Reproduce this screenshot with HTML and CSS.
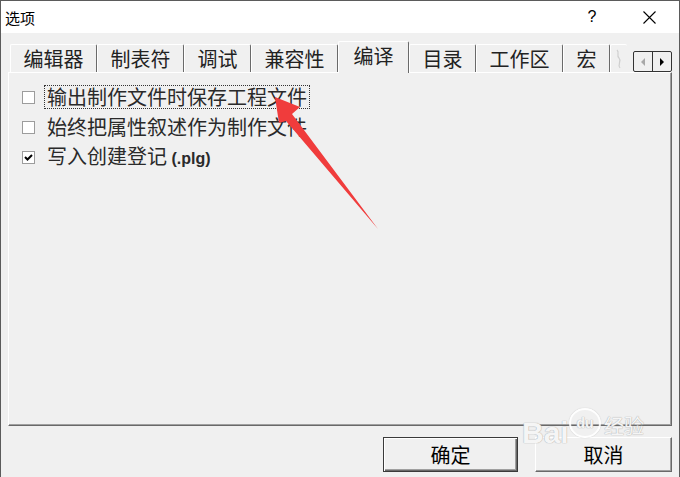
FILE: index.html
```html
<!DOCTYPE html>
<html lang="zh-CN">
<head>
<meta charset="UTF-8" />
<title>选项</title>
<link rel="stylesheet" href="styles.css">
</head>
<body>

<div class="window">
  <!-- title bar -->
  <div class="titlebar">
    <span class="title">选项</span>
    <span class="help">?</span>
    <span class="close">
      <svg width="13" height="13" viewBox="0 0 13 13"><path d="M0.5 0.5 L12.5 12.5 M12.5 0.5 L0.5 12.5" stroke="#000" stroke-width="1.1" /></svg>
    </span>
  </div>

  <div class="client">
    <!-- tabs -->
    <div class="tabstrip">
      <div class="tab">编辑器</div>
      <div class="tab">制表符</div>
      <div class="tab">调试</div>
      <div class="tab">兼容性</div>
      <div class="tab active">编译</div>
      <div class="tab">目录</div>
      <div class="tab">工作区</div>
      <div class="tab">宏</div>
      <div class="tab clipped">
        <svg width="8" height="20" viewBox="0 0 8 20"><path d="M2 1 C5 4 1 6 4 9 C7 12 2 15 5 19" fill="none" stroke="#cfcfcf" stroke-width="1.2" /></svg>
      </div>
      <div class="scroller">
        <span class="half"><i class="tri left"></i></span>
        <span class="half divided"><i class="tri right"></i></span>
      </div>
    </div>

    <!-- compile page -->
    <div class="panel">
      <div class="row"><span class="box"></span><span class="text focus">输出制作文件时保存工程文件</span></div>
      <div class="row"><span class="box"></span><span class="text">始终把属性叙述作为制作文件</span></div>
      <div class="row">
        <span class="box checked">
          <svg width="11" height="11" viewBox="0 0 11 11"><path d="M2 5 L4.5 7.5 L9 3" fill="none" stroke="#000" stroke-width="2" /></svg>
        </span>
        <span class="text">写入创建登记 <b class="ext">(.plg)</b></span>
      </div>
    </div>

    <div class="buttons">
      <button class="btn default">确定</button>
      <button class="btn">取消</button>
    </div>
  </div>

  <!-- annotation arrow -->
  <svg class="arrow" width="680" height="477" viewBox="0 0 680 477">
    <polygon points="275,97 300,107 292,114 378,229 286,121 279,123" fill="#f03c3c" />
  </svg>

  <!-- watermark -->
  <div class="watermark">
    <span class="wm-bai">Bai</span>
    <span class="wm-paw">du</span>
    <span class="wm-jy">经验</span>
  </div>
</div>

</body>
</html>
```

FILE: styles.css
```css
* {
  box-sizing: border-box;
}
body {
  margin: 0;
  font-family: "Noto Sans CJK SC", "Liberation Sans", sans-serif;
  color: #000;
}
.window {
  width: 680px;
  height: 477px;
  border: 1px solid #5b5b5b;
  border-bottom: none;
  background: #f0f0f0;
  display: flex;
  flex-direction: column;
  position: relative;
  overflow: hidden;
}

/* title bar */
.titlebar {
  height: 32px;
  background: #fff;
  display: flex;
  align-items: center;
  padding-left: 4px;
  font-size: 15px;
}
.title {
  flex: 1;
}
.help {
  width: 20px;
  text-align: center;
  margin-right: 24px;
  font-size: 16px;
  font-family: "Liberation Sans", sans-serif;
}
.close {
  width: 46px;
  margin-right: 7px;
  display: flex;
  justify-content: center;
}

/* tabs */
.client {
  flex: 1;
  display: flex;
  flex-direction: column;
}
.tabstrip {
  height: 39px;
  display: flex;
  align-items: flex-end;
  padding: 0 7px 0 9px;
}
.tab {
  flex: none;
  height: 28px;
  padding: 0 12.5px;
  border-top: 1px solid #fff;
  border-left: 1px solid #fff;
  border-right: 1px solid #6a6a6a;
  border-radius: 2px 2px 0 0;
  font-size: 20px;
  line-height: 26px;
  display: flex;
  align-items: center;
  white-space: nowrap;
  color: #222;
}
.tab.active {
  height: 32px;
  margin-bottom: -1px;
  padding: 0 14.5px 3px;
  background: #f0f0f0;
  position: relative;
  z-index: 1;
}
.tab.clipped {
  width: 17px;
  padding: 0 0 0 4px;
  border-right: none;
}
.scroller {
  flex: none;
  margin-left: auto;
  margin-bottom: 0;
  width: 39px;
  min-width: 39px;
  height: 21px;
  border: 1px solid #333;
  border-radius: 2px;
  display: flex;
  background: #f0f0f0;
  position: relative;
  z-index: 1;
}
.half {
  flex: none;
  width: 18px;
  height: 19px;
  display: flex;
  align-items: center;
  justify-content: center;
}
.half.divided {
  width: 19px;
  border-left: 1px solid #333;
}
.tri {
  display: block;
  width: 0;
  height: 0;
  border-top: 4px solid transparent;
  border-bottom: 4px solid transparent;
}
.tri.left {
  border-right: 4px solid #a8a8a8;
}
.tri.right {
  border-left: 4px solid #000;
}

/* page */
.panel {
  height: 354px;
  margin: 0 7px;
  border-top: 1px solid #fff;
  border-left: 1px solid #fff;
  border-right: 1px solid #696969;
  border-bottom: 1px solid #696969;
  box-shadow: inset -1px -1px 0 #a0a0a0;
  padding: 9px 0 0 13px;
}
.row {
  height: 30px;
  display: flex;
  align-items: center;
}
.box {
  width: 13px;
  height: 13px;
  border: 1px solid #9c9c9c;
  background: #fff;
  margin-right: 9px;
  display: flex;
  align-items: center;
  justify-content: center;
}
.text {
  font-size: 20px;
  line-height: 22px;
  padding: 0 2px;
  border: 1px dotted transparent;
  color: #2a2a2a;
  white-space: nowrap;
}
.text.focus {
  border-color: #333;
}
.ext {
  font-family: "Liberation Sans", sans-serif;
  font-size: 16px;
  font-weight: 700;
}

/* buttons */
.buttons {
  margin-top: 11px;
  display: flex;
  justify-content: flex-end;
  gap: 17px;
  padding-right: 7px;
}
.btn {
  width: 137px;
  height: 35px;
  font-family: "Noto Sans CJK SC", sans-serif;
  font-size: 20px;
  line-height: 1;
  color: #000;
  background: #f0f0f0;
  border-top: 1px solid #fff;
  border-left: 1px solid #fff;
  border-right: 1px solid #696969;
  border-bottom: 1px solid #696969;
  box-shadow: inset -1px -1px 0 #a0a0a0;
  padding: 0;
}
.btn.default {
  width: 135px;
  border: 1px solid #3a3a3a;
  box-shadow: inset 1px 1px 0 #fff, inset -1px -1px 0 #696969, inset -2px -2px 0 #a0a0a0;
}

/* overlays */
.arrow {
  position: absolute;
  left: -1px;
  top: -1px;
  pointer-events: none;
}
.watermark {
  position: absolute;
  left: 521px;
  top: 403px;
  width: 125px;
  height: 34px;
  pointer-events: none;
  color: rgba(255, 255, 255, 0.9);
  text-shadow: 0 0 1px #b0b0b0, 0 0 1px #b0b0b0;
}
.wm-bai {
  position: absolute;
  left: 0;
  top: 14px;
  font-family: "Liberation Sans", sans-serif;
  font-weight: 700;
  font-size: 30px;
  line-height: 30px;
}
.wm-paw {
  position: absolute;
  left: 47px;
  top: 4px;
  width: 32px;
  height: 30px;
  border-radius: 50%;
  border: 2px solid rgba(255, 255, 255, 0.9);
  box-shadow: 0 0 1px #b0b0b0;
  font-family: "Liberation Sans", sans-serif;
  font-weight: 700;
  font-size: 14px;
  text-align: center;
  line-height: 26px;
}
.wm-jy {
  position: absolute;
  left: 82px;
  top: 10px;
  font-size: 20px;
  line-height: 24px;
}
```
